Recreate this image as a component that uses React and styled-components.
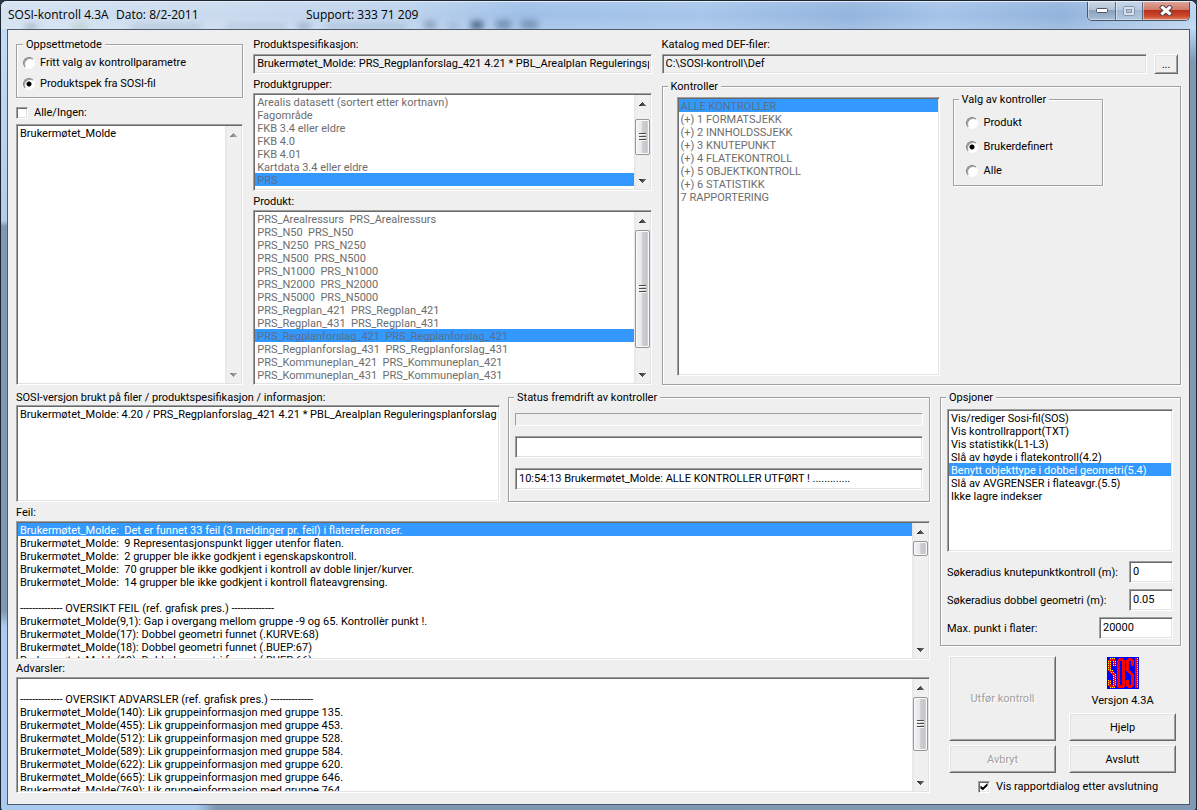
import React, { useState } from "react";
import styled, { createGlobalStyle, css } from "styled-components";

const FACE = "#efefef";

const GlobalStyle = createGlobalStyle`
  *, *::before, *::after { box-sizing: border-box; }
  body {
    margin: 0;
    background: #2b3644;
    color: #000;
    font-family: Roboto, "Liberation Sans", Arial, sans-serif;
    font-size: 11px;
    line-height: 13px;
  }
  button, input { font: inherit; color: inherit; margin: 0; }
`;

const sunken = css`
  border: 1px solid;
  border-color: #a0a0a0 #fff #fff #a0a0a0;
  box-shadow: inset 1px 1px #696969, inset -1px -1px #e3e3e3;
`;

/* ---------- window frame ---------- */

const Window = styled.div`
  min-height: 100vh;
  display: flex;
  flex-direction: column;
  padding: 0 6px 6px;
  border: 1px solid #1d2530;
  border-radius: 7px 7px 5px 5px;
  background:
    linear-gradient(90deg, #a9cbf0 0, #a9cbf0 195px, #7f97b1 215px, #8299b4 100%) bottom / 100% 7px no-repeat,
    linear-gradient(180deg, #cfe0f2 0, #c5dbf3 30px, #b6cce4 220px, #8198b3 225px, #8198b3 610px, #a9cbf0 625px, #a9cbf0 100%) left / 7px 100% no-repeat,
    linear-gradient(180deg, #cfe0f2 0, #b7d4f3 30px, #8198b3 60px, #8299b4 100%) right / 7px 100% no-repeat,
    #a9c7ea;
`;

const TitleBar = styled.header`
  position: relative;
  display: flex;
  align-items: flex-start;
  height: 28px;
  margin: 0 -6px;
  padding: 0 6px 0 7px;
  overflow: hidden;
  border-radius: 6px 6px 0 0;
  border-top: 1px solid #e4eefa;
  background:
    linear-gradient(180deg, rgba(255, 255, 255, 0.1), rgba(255, 255, 255, 0) 50%, rgba(255, 255, 255, 0.15)),
    linear-gradient(90deg, #d3e1f1 0, #c9daee 220px, #bdd3ed 400px, #9fc0e8 520px, #a6c5ea 700px, #93b4de 850px, #a4c3e9 940px, #92b3dc 1060px, #bcd4f0 100%);
  font-family: "Open Sans", "Noto Sans", sans-serif;
  font-size: 12px;
  line-height: 26px;
`;

const Glass = styled.svg`
  position: absolute;
  inset: 0;
  width: 100%;
  height: 100%;
  filter: blur(3px);
`;

const TitleText = styled.span`
  position: relative;
  flex: 0 0 ${(p) => p.$width || "auto"};
  white-space: pre;
`;

const CaptionButtons = styled.div`
  position: relative;
  display: flex;
  margin: -1px 0 0 auto;
  border: 1px solid #46566b;
  border-top: 0;
  border-radius: 0 0 5px 5px;
  overflow: hidden;
  flex: none;
`;

const CaptionButton = styled.button`
  display: grid;
  place-items: center;
  width: ${(p) => (p.$close ? 47 : 27)}px;
  height: 19px;
  padding: 0;
  border: 0;
  border-left: ${(p) => (p.$first ? 0 : 1)}px solid #5b6c82;
  box-shadow: inset 1px 0 rgba(255, 255, 255, 0.45), inset 0 -1px rgba(255, 255, 255, 0.4);
  background: ${(p) =>
    p.$close
      ? "linear-gradient(180deg, #e0a89c 0, #cf7c6b 45%, #b7301a 50%, #cc4a30 80%, #e28a68 100%)"
      : p.$dim
        ? "linear-gradient(180deg, #c9d8ea 0, #b9cbe0 45%, #a3b8d2 50%, #b2c8e2 100%)"
        : "linear-gradient(180deg, #cdd9e7 0, #b3c3d6 45%, #8ca1bb 50%, #a8bfda 100%)"};
`;

const Client = styled.main`
  flex: 1;
  display: flex;
  flex-direction: column;
  padding: 8px 8px 11px;
  border: 1px solid #4c5a6b;
  background: ${FACE};
`;

/* ---------- layout ---------- */

const Upper = styled.section`
  display: grid;
  grid-template-columns: minmax(0, 227fr) minmax(0, 398fr) minmax(0, 519fr);
  gap: 10px;
  min-height: 347px;
`;

const Lower = styled.section`
  flex: 1;
  display: grid;
  grid-template-columns: minmax(0, 1fr) 241px;
  gap: 10px;
  padding-top: 6px;
`;

const Column = styled.div`
  display: flex;
  flex-direction: column;
  gap: ${(p) => p.$gap || 0}px;
  min-width: 0;
`;

const FileColumn = styled(Column)`
  flex: 1;
  padding-top: 8px;
`;

const StatusRow = styled.div`
  display: grid;
  grid-template-columns: minmax(0, 484fr) minmax(0, 422fr);
  gap: 8px;
  margin-bottom: 2px;
`;

const Field = styled.div`
  display: flex;
  flex-direction: column;
  gap: ${(p) => p.$gap || 2}px;
  flex: ${(p) => (p.$grow ? "1 1 auto" : "none")};
  min-width: 0;
`;

const Caption = styled.label`
  white-space: nowrap;
`;

const Line = styled.div`
  display: flex;
  align-items: center;
  justify-content: ${(p) => p.$justify || "flex-start"};
  gap: 7px;
`;

/* ---------- controls ---------- */

const Group = styled.fieldset`
  display: flex;
  flex-direction: column;
  gap: ${(p) => p.$gap || 0}px;
  flex: ${(p) => (p.$grow ? 1 : "none")};
  min-width: 0;
  margin: 0;
  padding: ${(p) => p.$pad};
  border: 1px solid #a0a0a0;
  box-shadow: 1px 1px #fff, inset 1px 1px #fff;
`;

const Legend = styled.legend`
  margin-left: ${(p) => p.$indent || 0}px;
  padding: 0 3px;
  background: ${FACE};
`;

const TextInput = styled.input`
  ${sunken}
  flex: ${(p) => (p.$grow ? "1 1 0" : "none")};
  width: ${(p) => p.$width || "auto"};
  min-width: 0;
  height: ${(p) => p.$height || 22}px;
  padding: 0 2px 2px 3px;
  border-radius: 0;
  background: ${(p) => (p.$face ? FACE : "#fff")};
  outline: 0;
`;

const Progress = styled.div`
  height: 13px;
  border: 1px solid;
  border-color: #a0a0a0 #fff #fff #a0a0a0;
`;

const PushButton = styled.button`
  display: grid;
  place-items: center;
  width: ${(p) => p.$width || "auto"};
  height: ${(p) => p.$height || 28}px;
  padding: 0;
  border: 1px solid;
  border-color: #fff #696969 #696969 #fff;
  border-radius: 0;
  box-shadow: inset 1px 1px #e3e3e3, inset -1px -1px #a0a0a0;
  background: ${FACE};

  &:disabled {
    color: #a0a0a0;
    text-shadow: 1px 1px #fff;
  }
`;

const BrowseButton = styled(PushButton)`
  margin-right: 3px;
`;

const Option = styled.label`
  display: flex;
  align-items: center;
  gap: ${(p) => p.$gap || 6}px;
  white-space: nowrap;
`;

const RadioInput = styled.input`
  appearance: none;
  width: 12px;
  height: 12px;
  border: 1px solid;
  border-color: #808080 #fff #fff #808080;
  border-radius: 50%;
  background: ${(p) =>
    p.checked ? "radial-gradient(circle, #000 0, #000 2px, #fff 3px)" : "#fff"};
  box-shadow: inset 1px 1px #9a9a9a;
`;

const CheckInput = styled.input`
  ${sunken}
  appearance: none;
  position: relative;
  flex: none;
  width: 12px;
  height: 12px;
  background: #fff;

  &:checked::before {
    content: "";
    position: absolute;
    inset: 1px;
    background: #000;
    clip-path: polygon(6% 38%, 36% 62%, 94% 6%, 94% 42%, 36% 98%, 6% 74%);
  }
`;

/* ---------- list box ---------- */

const ListFrame = styled.div`
  ${sunken}
  display: flex;
  flex: ${(p) => (p.$grow ? "1 1 0" : "none")};
  height: ${(p) => (p.$height ? `${p.$height}px` : "auto")};
  min-height: 0;
  padding: 1px;
  background: #fff;
`;

const Items = styled.ul`
  flex: 1;
  min-width: 0;
  height: 100%;
  margin: 0;
  padding: 0;
  overflow: hidden;
  list-style: none;
  line-height: 15px;
  color: ${(p) => (p.$dim ? "#6d6d6d" : "#000")};
`;

const Item = styled.li`
  height: 13px;
  padding-left: 2px;
  white-space: pre;
  ${(p) =>
    p.$selected &&
    css`
      background: #3399ff;
      color: ${p.$dim ? "#5c6f86" : "#fff"};
    `}
`;

const Scroll = styled.div`
  display: flex;
  flex-direction: column;
  width: 16px;
  background: linear-gradient(90deg, #e6e6e6, #f0f0f0 20%, #f0f0f0);
`;

const Track = styled.div`
  flex: 1;
  padding: ${(p) => p.$offset}px 0 0 1px;
  overflow: hidden;
`;

const Thumb = styled.div`
  display: grid;
  place-items: center;
  width: 15px;
  height: ${(p) => p.$size}px;
  border: 1px solid #979797;
  border-radius: 2px;
  box-shadow: inset 0 0 0 1px #f9f9f9;
  background: linear-gradient(90deg, #f4f4f4, #e6e6e6 45%, #cfd0d3 50%, #c4c6ca 80%, #dcdcdc);
`;

function Arrow({ down, dim }) {
  const id = `${down ? "d" : "u"}${dim ? "dim" : ""}`;
  return (
    <svg width="17" height="17" viewBox="0 0 17 17" shapeRendering="crispEdges" aria-hidden="true">
      <defs>
        <linearGradient id={id} x1="0" x2="1">
          <stop offset="0" stopColor={dim ? "#777" : "#222"} />
          <stop offset="1" stopColor={dim ? "#b5b5b5" : "#777"} />
        </linearGradient>
      </defs>
      <path d={down ? "M5 7h7L8.500 11z" : "M5 11h7L8.500 7z"} fill={`url(#${id})`} />
    </svg>
  );
}

function ScrollBar({ offset = 0, size, grip = true }) {
  return (
    <Scroll aria-hidden="true">
      <Arrow dim={!size} />
      <Track $offset={offset}>
        {size ? (
          <Thumb $size={size}>
            {grip && (
              <svg width="7" height="8" viewBox="0 0 7 8" shapeRendering="crispEdges">
                <path d="M0 .5h7M0 3.500h7M0 6.500h7" stroke="#4a4a4a" />
                <path d="M0 1.500h7M0 4.500h7M0 7.500h7" stroke="#f7f7f7" />
              </svg>
            )}
          </Thumb>
        ) : null}
      </Track>
      <Arrow down dim={!size} />
    </Scroll>
  );
}

function ListBox({ label, items, initial = -1, dim, height, grow, scroll }) {
  const [selected, setSelected] = useState(initial);
  return (
    <ListFrame $height={height} $grow={grow}>
      <Items role="listbox" aria-label={label} aria-disabled={dim || undefined} $dim={dim}>
        {items.map((text, i) => (
          <Item
            key={i}
            role="option"
            aria-selected={i === selected}
            $selected={i === selected}
            $dim={dim}
            onClick={dim ? undefined : () => setSelected(i)}
          >
            {text}
          </Item>
        ))}
      </Items>
      {scroll && <ScrollBar {...scroll} />}
    </ListFrame>
  );
}

function RadioSet({ name, options, initial, gap }) {
  const [value, setValue] = useState(initial);
  return options.map((text) => (
    <Option key={text} $gap={gap}>
      <RadioInput type="radio" name={name} checked={value === text} onChange={() => setValue(text)} />
      {text}
    </Option>
  ));
}

function Logo() {
  return (
    <svg width="32" height="32" viewBox="0 0 32 32" shapeRendering="crispEdges" role="img" aria-label="SOSI">
      <rect width="32" height="32" fill="#0000ff" />
      <g fill="none" stroke="#ff0000" strokeWidth="3">
        <polyline points="7.500,9 7.500,4 6,2.500 4,2.500 2.500,4 2.500,13 7.500,18 7.500,28 6,29.500 4,29.500 2.500,28 2.500,23" />
        <rect x="11.500" y="2.500" width="5" height="27" rx="2" />
        <polyline points="25.500,9 25.500,4 24,2.500 22,2.500 20.500,4 20.500,13 25.500,18 25.500,28 24,29.500 22,29.500 20.500,28 20.500,23" />
        <line x1="29.500" y1="1" x2="29.500" y2="31" />
      </g>
      <g fill="none" stroke="#ffff00" strokeWidth="1" strokeDasharray="1 1">
        <path d="M1.500 4v10M3.500 4v9M6.500 4v5M8.500 4v5" />
        <path d="M6.500 18v11M8.500 17v12M1.500 23v6M3.500 24v4" />
        <path d="M3 1.500h5M3 30.500h5M3 13.500h3M4 15.500h3" />
        <path d="M30.500 1v30" />
      </g>
    </svg>
  );
}

const LogoBlock = styled.div`
  display: flex;
  flex-direction: column;
  align-items: center;
  gap: 5px;
  height: 57px;
  padding-top: 1px;
`;

const Actions = styled.div`
  display: grid;
  grid-template-columns: 107px 107px;
  gap: 13px;
  padding: 10px 5px 0 9px;
`;

const CheckArea = styled.div`
  display: flex;
  flex: 1;
  align-items: flex-start;
  gap: 13px;
`;

const ControlsList = styled.div`
  display: flex;
  flex: 0 1 263px;
  align-self: stretch;
  min-width: 0;
  padding-top: 4px;

  > div { flex: 1; }
`;

const ChoiceBox = styled.div`
  flex: 0 1 150px;
`;

const Limits = styled.div`
  display: flex;
  flex-direction: column;
  gap: 6px;
  padding-top: 3px;
`;

const ReportLine = styled.div`
  padding: 7px 0 0 38px;
`;

/* ---------- data ---------- */

const GROUPS = [
  "Arealis datasett (sortert etter kortnavn)",
  "Fagområde",
  "FKB 3.4 eller eldre",
  "FKB 4.0",
  "FKB 4.01",
  "Kartdata 3.4 eller eldre",
  "PRS",
  "Statkart",
];

const PRODUCTS = [
  "Arealressurs", "N50", "N250", "N500", "N1000", "N2000", "N5000",
  "Regplan_421", "Regplan_431", "Regplanforslag_421", "Regplanforslag_431",
  "Kommuneplan_421", "Kommuneplan_431", "Sentrum_V",
].map((n) => `PRS_${n}  PRS_${n}`);

const CHECKS = [
  "ALLE KONTROLLER",
  "(+) 1 FORMATSJEKK",
  "(+) 2 INNHOLDSSJEKK",
  "(+) 3 KNUTEPUNKT",
  "(+) 4 FLATEKONTROLL",
  "(+) 5 OBJEKTKONTROLL",
  "(+) 6 STATISTIKK",
  "7 RAPPORTERING",
];

const OPTIONS = [
  "Vis/rediger Sosi-fil(SOS)",
  "Vis kontrollrapport(TXT)",
  "Vis statistikk(L1-L3)",
  "Slå av høyde i flatekontroll(4.2)",
  "Benytt objekttype i dobbel geometri(5.4)",
  "Slå av AVGRENSER i flateavgr.(5.5)",
  "Ikke lagre indekser",
];

const ERRORS = [
  "Brukermøtet_Molde:  Det er funnet 33 feil (3 meldinger pr. feil) i flatereferanser.",
  "Brukermøtet_Molde:  9 Representasjonspunkt ligger utenfor flaten.",
  "Brukermøtet_Molde:  2 grupper ble ikke godkjent i egenskapskontroll.",
  "Brukermøtet_Molde:  70 grupper ble ikke godkjent i kontroll av doble linjer/kurver.",
  "Brukermøtet_Molde:  14 grupper ble ikke godkjent i kontroll flateavgrensing.",
  "",
  "-------------- OVERSIKT FEIL (ref. grafisk pres.) --------------",
  "Brukermøtet_Molde(9,1): Gap i overgang mellom gruppe -9 og 65. Kontrollèr punkt !.",
  "Brukermøtet_Molde(17): Dobbel geometri funnet (.KURVE:68)",
  "Brukermøtet_Molde(18): Dobbel geometri funnet (.BUEP:67)",
  "Brukermøtet_Molde(19): Dobbel geometri funnet (.BUEP:66)",
];

const WARNINGS = [
  "",
  "-------------- OVERSIKT ADVARSLER (ref. grafisk pres.) --------------",
  ...[[140, 135], [455, 453], [512, 528], [589, 584], [622, 620], [665, 646], [769, 764]].map(
    ([a, b]) => `Brukermøtet_Molde(${a}): Lik gruppeinformasjon med gruppe ${b}.`
  ),
];

const LIMITS = [
  ["knute", "Søkeradius knutepunktkontroll (m):", "0", "44px"],
  ["dobbel", "Søkeradius dobbel geometri (m):", "0.05", "44px"],
  ["maks", "Max. punkt i flater:", "20000", "74px"],
];

/* ---------- page ---------- */

export default function App() {
  const [all, setAll] = useState(false);
  const [report, setReport] = useState(true);

  return (
    <Window>
      <GlobalStyle />
      <TitleBar>
        <Glass aria-hidden="true">
          <g fill="#3c5878">
            <rect x="24" y="23" width="12" height="8" opacity=".45" />
            <rect x="72" y="23" width="14" height="8" opacity=".3" fill="#7b8a3a" />
            <rect x="130" y="23" width="70" height="6" opacity=".25" />
            <rect x="225" y="23" width="60" height="6" opacity=".2" />
            <rect x="297" y="22" width="12" height="8" opacity=".4" />
            <rect x="325" y="23" width="80" height="6" opacity=".25" />
            <rect x="423" y="19" width="12" height="10" opacity=".4" />
            <rect x="446" y="21" width="12" height="8" opacity=".2" />
            <rect x="470" y="19" width="12" height="12" opacity=".9" />
            <rect x="495" y="18" width="15" height="10" opacity=".5" />
            <rect x="520" y="18" width="17" height="9" opacity=".45" />
          </g>
        </Glass>
        <TitleText $width="108px">SOSI-kontroll 4.3A</TitleText>
        <TitleText $width="190px">Dato: 8/2-2011</TitleText>
        <TitleText>Support: 333 71 209</TitleText>
        <CaptionButtons>
          <CaptionButton $first aria-label="Minimer">
            <svg width="12" height="6" viewBox="0 0 12 6"><rect x=".5" y=".5" width="11" height="4" rx="1" fill="#fff" stroke="#4b5568" /></svg>
          </CaptionButton>
          <CaptionButton $dim aria-label="Maksimer">
            <svg width="12" height="10" viewBox="0 0 12 10" fill="#d5e0ec" stroke="#8797ab"><rect x=".5" y=".5" width="11" height="9" rx="1" /><rect x="3.500" y="3.500" width="5" height="3" fill="#b2c4d9" /></svg>
          </CaptionButton>
          <CaptionButton $close aria-label="Lukk">
            <svg width="14" height="11" viewBox="0 0 14 11" fill="none"><path d="M3.500 2.500l7 6M10.500 2.500l-7 6" stroke="#59424b" strokeWidth="5" strokeLinecap="square" /><path d="M3.500 2.500l7 6M10.500 2.500l-7 6" stroke="#fff" strokeWidth="3" strokeLinecap="square" /></svg>
          </CaptionButton>
        </CaptionButtons>
      </TitleBar>

      <Client>
        <Upper>
          <Column>
            <Group $gap={8} $pad="5px 6px 7px">
              <Legend>Oppsettmetode</Legend>
              <RadioSet
                name="metode"
                gap={5}
                initial="Produktspek fra SOSI-fil"
                options={["Fritt valg av kontrollparametre", "Produktspek fra SOSI-fil"]}
              />
            </Group>
            <FileColumn $gap={5}>
              <Option>
                <CheckInput type="checkbox" checked={all} onChange={(e) => setAll(e.target.checked)} />
                Alle/Ingen:
              </Option>
              <ListBox label="Filer" grow items={["Brukermøtet_Molde"]} scroll={{}} />
            </FileColumn>
          </Column>

          <Column $gap={4}>
            <Field $gap={3}>
              <Caption htmlFor="spek">Produktspesifikasjon:</Caption>
              <TextInput id="spek" $face $height={20} readOnly value="Brukermøtet_Molde: PRS_Regplanforslag_421 4.21 * PBL_Arealplan Reguleringsplanforslag" />
            </Field>
            <Field>
              <Caption as="span">Produktgrupper:</Caption>
              <ListBox label="Produktgrupper" dim height={98} initial={6} items={GROUPS} scroll={{ offset: 7, size: 36 }} />
            </Field>
            <Field $grow>
              <Caption as="span">Produkt:</Caption>
              <ListBox label="Produkt" dim grow initial={9} items={PRODUCTS} scroll={{ offset: 1, size: 118 }} />
            </Field>
          </Column>

          <Column $gap={6}>
            <Field $gap={3}>
              <Caption htmlFor="katalog">Katalog med DEF-filer:</Caption>
              <Line>
                <TextInput id="katalog" $grow $face $height={20} defaultValue="C:\SOSI-kontroll\Def" />
                <BrowseButton $width="24px" $height={20} aria-label="Velg katalog">...</BrowseButton>
              </Line>
            </Field>
            <Group $grow $pad="0 6px 8px 14px">
              <Legend $indent={-9}>Kontroller</Legend>
              <CheckArea>
                <ControlsList>
                  <ListBox label="Kontroller" dim initial={0} items={CHECKS} />
                </ControlsList>
                <ChoiceBox>
                  <Group $gap={11} $pad="10px 12px 8px">
                    <Legend $indent={-7}>Valg av kontroller</Legend>
                    <RadioSet name="valg" initial="Brukerdefinert" options={["Produkt", "Brukerdefinert", "Alle"]} />
                  </Group>
                </ChoiceBox>
              </CheckArea>
            </Group>
          </Column>
        </Upper>

        <Lower>
          <Column $gap={2}>
            <StatusRow>
              <Field $gap={1}>
                <Caption as="span">SOSI-versjon brukt på filer / produktspesifikasjon / informasjon:</Caption>
                <ListBox
                  label="SOSI-versjon"
                  height={97}
                  items={["Brukermøtet_Molde: 4.20 / PRS_Regplanforslag_421 4.21 * PBL_Arealplan Reguleringsplanforslag"]}
                />
              </Field>
              <Group $gap={10} $pad="9px 6px">
                <Legend $indent={-1}>Status fremdrift av kontroller</Legend>
                <Progress role="progressbar" aria-label="Fremdrift" />
                <TextInput aria-label="Delstatus" readOnly value="" />
                <TextInput aria-label="Status" readOnly value="10:54:13 Brukermøtet_Molde: ALLE KONTROLLER UTFØRT ! ............." />
              </Group>
            </StatusRow>
            <Field>
              <Caption as="span">Feil:</Caption>
              <ListBox label="Feil" height={139} initial={0} items={ERRORS} scroll={{ offset: 1, size: 15, grip: false }} />
            </Field>
            <Field $grow>
              <Caption as="span">Advarsler:</Caption>
              <ListBox label="Advarsler" grow items={WARNINGS} scroll={{ offset: 1, size: 54 }} />
            </Field>
          </Column>

          <Column>
            <Group $gap={6} $pad="5px 7px 6px 6px">
              <Legend $indent={-1}>Opsjoner</Legend>
              <ListBox label="Opsjoner" height={143} initial={4} items={OPTIONS} />
              <Limits>
                {LIMITS.map(([id, text, value, width]) => (
                  <Line key={id} $justify="space-between">
                    <Caption htmlFor={id}>{text}</Caption>
                    <TextInput id={id} $width={width} defaultValue={value} />
                  </Line>
                ))}
              </Limits>
            </Group>
            <Actions>
              <Column $gap={4}>
                <PushButton disabled $height={85}>Utfør kontroll</PushButton>
                <PushButton disabled>Avbryt</PushButton>
              </Column>
              <Column $gap={4}>
                <div>
                  <LogoBlock>
                    <Logo />
                    <span>Versjon 4.3A</span>
                  </LogoBlock>
                  <PushButton $width="100%">Hjelp</PushButton>
                </div>
                <PushButton>Avslutt</PushButton>
              </Column>
            </Actions>
            <ReportLine>
              <Option>
                <CheckInput type="checkbox" checked={report} onChange={(e) => setReport(e.target.checked)} />
                Vis rapportdialog etter avslutning
              </Option>
            </ReportLine>
          </Column>
        </Lower>
      </Client>
    </Window>
  );
}
